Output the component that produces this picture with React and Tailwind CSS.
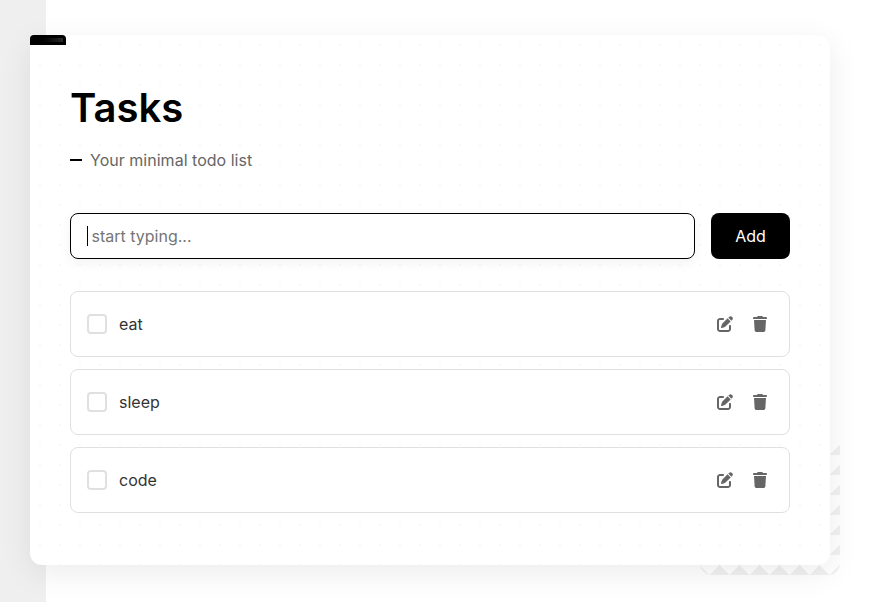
import { FaPenToSquare, FaTrash } from "react-icons/fa6";

const tasks = ["eat", "sleep", "code"];

function Task({ name }) {
  return (
    <li className="flex h-[66px] items-center rounded-lg border border-[#e0e0e0] bg-white px-4">
      <span className="mr-3 size-5 rounded-[4px] border-2 border-[#e0e0e0]" />
      <span className="flex-1 text-[#333333]">{name}</span>
      <div className="flex items-center gap-1 text-[#666666]">
        <button className="flex size-8 items-center justify-center" aria-label="Edit">
          <FaPenToSquare size={16} />
        </button>
        <button className="mr-[-2px] flex h-8 w-[30px] items-center justify-center" aria-label="Delete">
          <FaTrash size={16} />
        </button>
      </div>
    </li>
  );
}

export default function App() {
  return (
    <div className="relative isolate h-[602px] overflow-hidden bg-white pt-[35px] pl-[30px] font-['Inter',sans-serif] text-base text-[#333333]">
      <div className="absolute inset-y-0 left-0 -z-20 w-[46px] bg-[#efefef]" />
      <div className="relative h-[530px] w-[800px]">
        <div className="absolute -right-[10px] -bottom-[10px] size-[140px] rounded-xl bg-[linear-gradient(45deg,#f1f1f1_25%,transparent_25%),linear-gradient(-45deg,#f1f1f1_25%,transparent_25%)] bg-[size:20px_20px]" />
        <main className="relative h-full rounded-xl bg-white bg-[radial-gradient(circle_at_center,#f8f8f8_1px,transparent_1px)] bg-[size:20px_20px] px-10 pt-12 shadow-[0_8px_32px_rgba(0,0,0,0.08)]">
          <div className="absolute top-0 left-0 h-[10px] w-9 rounded-t-[4px] bg-black p-[3px]">
            <div className="h-1 bg-linear-to-r from-black to-[#2a2a2a]" />
          </div>
          <h1 className="h-[50px] text-[40px] leading-[50px] font-semibold text-black">Tasks</h1>
          <p className="mt-[15px] flex h-6 items-center tracking-[0.02px] text-[#666666]">
            <span className="mr-2 h-0.5 w-3 bg-black" />
            Your minimal todo list
          </p>
          <div className="mt-[41px] flex h-[46px] gap-4">
            <div className="flex flex-1 items-center rounded-lg border border-black bg-white pl-4 text-[#757575] shadow-[0_4px_12px_rgba(0,0,0,0.05)]">
              <span className="mr-[3.5px] h-5 w-px bg-black" />
              start typing...
            </div>
            <button className="w-[79px] rounded-lg bg-black text-white">Add</button>
          </div>
          <ul className="mt-8 flex flex-col gap-3">
            {tasks.map((name) => (
              <Task key={name} name={name} />
            ))}
          </ul>
        </main>
      </div>
    </div>
  );
}
